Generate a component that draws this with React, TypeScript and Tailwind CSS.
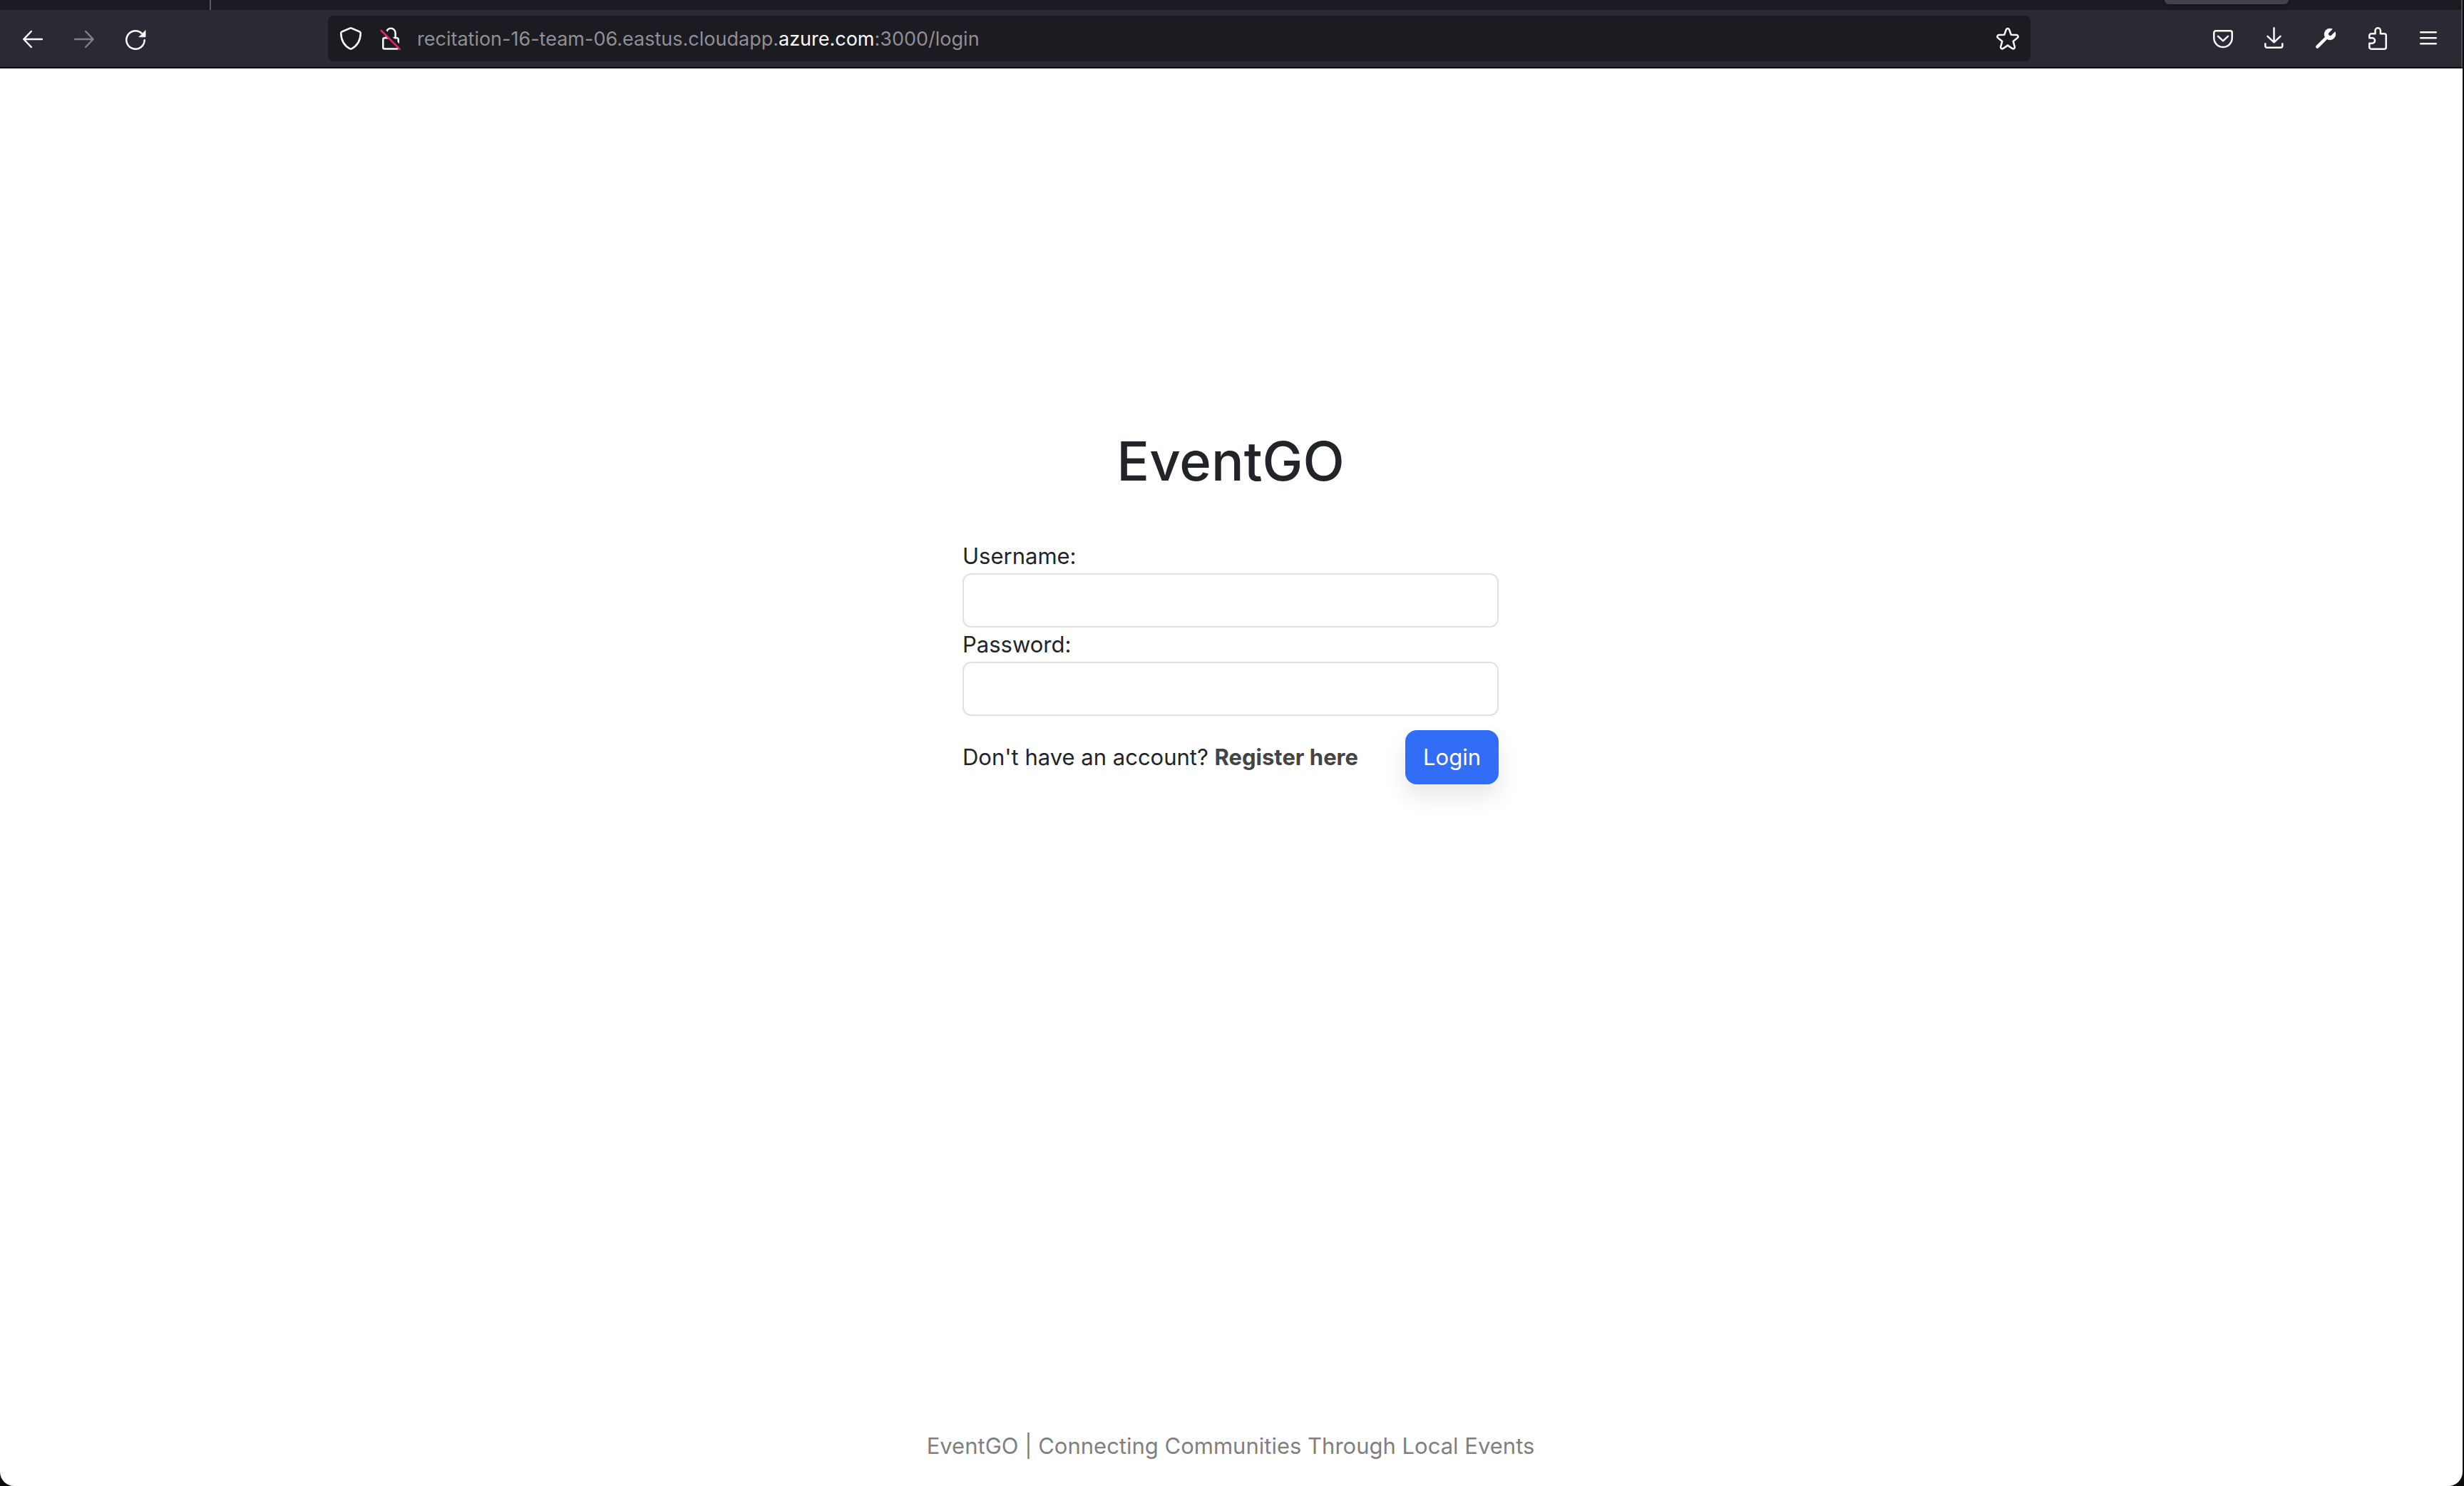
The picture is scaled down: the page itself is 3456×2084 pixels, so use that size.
import type { ReactNode } from "react";

function Icon({ children }: { children: ReactNode }) {
  return (
    <svg
      viewBox="0 0 32 32"
      className="size-8 shrink-0"
      fill="none"
      stroke="currentColor"
      strokeWidth="2.5"
      strokeLinecap="round"
      strokeLinejoin="round"
      aria-hidden="true"
    >
      {children}
    </svg>
  );
}

function IconButton({ label, disabled, children }: { label: string; disabled?: boolean; children: ReactNode }) {
  return (
    <button type="button" aria-label={label} disabled={disabled} className="shrink-0 text-[#fbfbfe] disabled:text-[#808084]">
      <Icon>{children}</Icon>
    </button>
  );
}

function BrowserChrome() {
  return (
    <header className="border-r-2 border-b-2 border-r-[#4a4a4f] border-b-[#0c0c0d] bg-[#2b2a33]">
      <div className="flex h-3.5 items-start justify-between bg-[#1c1b22] pr-[242px] pl-[294px]">
        <div className="h-full w-0.5 bg-[#5b5b66]" />
        <div className="h-1.5 w-[174px] rounded-b-lg bg-[#42414d] shadow-[0_0_4px_rgba(0,0,0,0.6)]" />
      </div>
      <nav className="flex h-20 items-center px-[30px]" aria-label="Browser">
        <div className="flex gap-10">
          <IconButton label="Back">
            <path d="M28.8 17H3.5M13.8 6 3.3 17l10.5 11" />
          </IconButton>
          <IconButton label="Forward" disabled>
            <path d="M3.2 17h25.3M18.2 6l10.5 11-10.5 11" />
          </IconButton>
          <IconButton label="Reload">
            <path d="M28.7 18.3A12.7 12.7 0 1 1 24.6 8.7" />
            <path d="M30 5v8.8h-8.8z" fill="currentColor" strokeWidth="0.8" />
          </IconButton>
        </div>
        <div className="mx-[254px] flex h-16 flex-1 items-center rounded-lg bg-[#1c1b22] px-4">
          <div className="flex gap-6">
            <IconButton label="Tracking protection">
              <path d="M14.9 1.6a2.5 2.5 0 0 1 2.2 0L28.6 6.5c.8.4 1.3 1 1.2 1.9C29.5 19 25.5 26 17.2 30.3a2.6 2.6 0 0 1-2.4 0C6.5 26 2.5 19 2.2 8.4c0-.9.4-1.5 1.2-1.9z" />
            </IconButton>
            <IconButton label="Connection is not secure">
              <path d="M9.9 15V8a6.3 6.3 0 0 1 12.7 0v7M7.3 15.3h17.4a2 2 0 0 1 2 2v11.2a2 2 0 0 1-2 2H7.3a2 2 0 0 1-2-2V17.3a2 2 0 0 1 2-2z" />
              <path d="M4.5 2.5 31 29" stroke="#1c1b22" strokeWidth="4" strokeLinecap="butt" />
              <path d="M2.8 5 28.8 31" stroke="#e22850" />
            </IconButton>
          </div>
          <p className="ml-[21px] flex-1 pt-0.5 text-[27px] leading-8 text-[#8f8f94]">
            recitation-16-team-06.eastus.cloudapp.<span className="text-[#fbfbfe]">azure.com</span>:3000/login
          </p>
          <IconButton label="Bookmark this page">
            <path d="M13.9 3.4c.8-2 3.4-2 4.2 0l2.6 7.3 7.7.3c2.2.2 3 2.7 1.3 4.1l-6 4.900 2.100 7.500c.5 2-1.600 3.600-3.400 2.500L16 25.600 9.600 30c-1.800 1.100-3.900-.5-3.400-2.500l2.100-7.500-6-4.900c-1.700-1.400-.9-3.900 1.300-4.100l7.700-.3z" />
          </IconButton>
        </div>
        <div className="flex gap-10">
          <IconButton label="Save to Pocket">
            <path d="M5.8 5.3h20.4a2.5 2.5 0 0 1 2.5 2.5v7.5a12.7 12.7 0 0 1-25.400 0V7.800a2.500 2.500 0 0 1 2.500-2.500z" />
            <path d="m9 12.800 7 6.500 7-6.500" />
          </IconButton>
          <IconButton label="Downloads">
            <path d="M15.500 1.300v19.500M6.500 12.800l9 8.500 9-8.500M3.300 23.300v2.900a2.500 2.500 0 0 0 2.500 2.500h19a2.500 2.500 0 0 0 2.500-2.500v-2.900" />
          </IconButton>
          <IconButton label="Developer tools">
            <path d="M4.300 27.700 17.500 14.500" strokeWidth="4.500" />
            <circle cx="22" cy="10" r="8.200" fill="currentColor" stroke="none" />
            <path d="M22.500 9.500 31 1" stroke="#2b2a33" strokeWidth="5" />
          </IconButton>
          <IconButton label="Extensions">
            <path d="M5.300 15.300v-3.500a2.500 2.500 0 0 1 2.500-2.500h5.700V5a3.700 3.700 0 0 1 7.400 0v4.300h5.300a2.500 2.500 0 0 1 2.500 2.500v16.400a2.500 2.500 0 0 1-2.500 2.500H7.800a2.500 2.500 0 0 1-2.500-2.500v-5.500h4a3.700 3.700 0 0 0 0-7.400z" />
          </IconButton>
          <IconButton label="Open menu">
            <path d="M5.200 7.200h21.600M5.200 15.200h21.600M5.200 23.300h21.600" />
          </IconButton>
        </div>
      </nav>
    </header>
  );
}

function Field({ id, label, type }: { id: string; label: string; type: string }) {
  return (
    <div>
      <label htmlFor={id} className="block">
        {label}
      </label>
      <input
        id={id}
        type={type}
        className="block h-19 w-full rounded-xl border-2 border-[#dee2e6] bg-white px-6 outline-none focus:border-[#86b7fe]"
      />
    </div>
  );
}

function LoginForm() {
  return (
    <form className="w-[752px]" onSubmit={(e) => e.preventDefault()}>
      <h1 className="mb-16 text-center text-[76px] leading-[92px] font-medium">EventGO</h1>
      <Field id="username" label="Username:" type="text" />
      <Field id="password" label="Password:" type="password" />
      <div className="mt-5 flex items-center justify-between">
        <p>
          Don't have an account?{" "}
          <a href="#register" className="font-bold text-[#444]">
            Register here
          </a>
        </p>
        <button
          type="submit"
          className="h-19 rounded-2xl bg-[#316df6] px-[25px] text-white shadow-[0_16px_32px_rgba(0,0,0,0.1)]"
        >
          Login
        </button>
      </div>
    </form>
  );
}

export default function App() {
  return (
    <div className="min-h-screen bg-[#0c0c0d] pr-0.5 font-['Inter',sans-serif]">
      <div className="flex min-h-screen flex-col overflow-hidden rounded-b-[20px] bg-white">
        <BrowserChrome />
        <main className="flex flex-1 flex-col items-center pt-[504px] pr-0.5 text-[31px] leading-12 text-[#212529]">
          <LoginForm />
          <footer className="mt-auto pb-8 text-[#808080]">EventGO | Connecting Communities Through Local Events</footer>
        </main>
      </div>
    </div>
  );
}
